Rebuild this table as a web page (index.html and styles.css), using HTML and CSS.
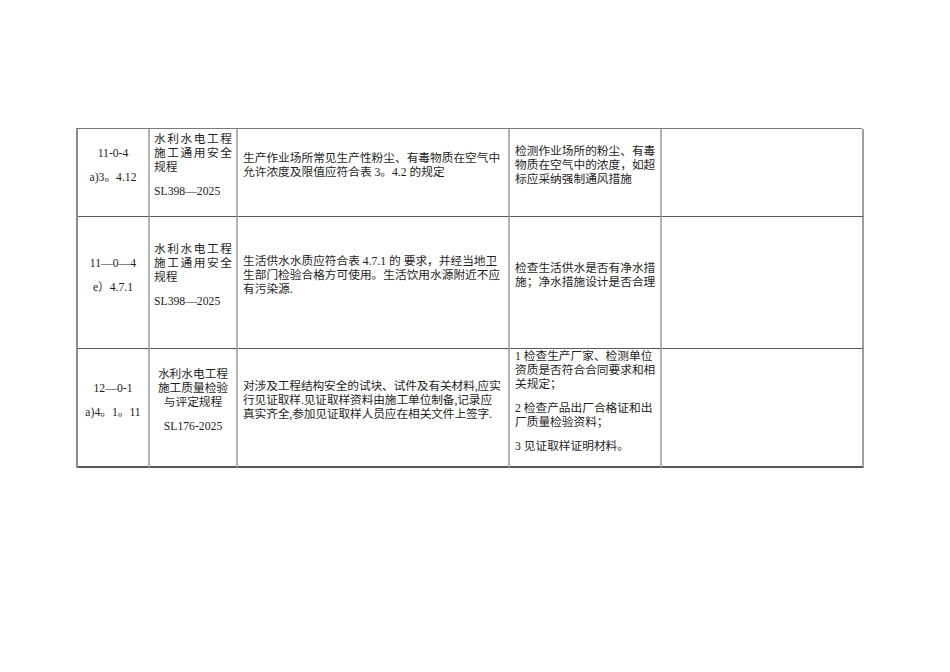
FILE: index.html
```html
<!DOCTYPE html>
<html lang="zh-CN">
<head>
<meta charset="utf-8">
<title>检查表</title>
<link rel="stylesheet" href="styles.css">
</head>
<body>
<div class="sheet">
  <div class="grid">
    <!-- row 1 -->
    <div class="cell c1 r1 center">
      <div class="p">11-0-4</div>
      <div class="p">a)3。4.12</div>
    </div>
    <div class="cell c2 r1">
      <div class="p"><span class="jl">水利水电工程</span><span class="jl">施工通用安全</span><span class="ln">规程</span></div>
      <div class="p">SL398—2025</div>
    </div>
    <div class="cell c3 r1">
      <div class="p"><span class="ln">生产作业场所常见生产性粉尘、有毒物质在空气中</span><span class="ln">允许浓度及限值应符合表 3。4.2 的规定</span></div>
    </div>
    <div class="cell c4 r1">
      <div class="p"><span class="ln">检测作业场所的粉尘、有毒</span><span class="ln">物质在空气中的浓度，如超</span><span class="ln">标应采纳强制通风措施</span></div>
    </div>
    <div class="cell c5 r1"></div>

    <!-- row 2 -->
    <div class="cell c1 r2 center">
      <div class="p">11—0—4</div>
      <div class="p">e）4.7.1</div>
    </div>
    <div class="cell c2 r2">
      <div class="p"><span class="jl">水利水电工程</span><span class="jl">施工通用安全</span><span class="ln">规程</span></div>
      <div class="p">SL398—2025</div>
    </div>
    <div class="cell c3 r2">
      <div class="p"><span class="ln">生活供水水质应符合表 4.7.1 的&nbsp;要求，并经当地卫</span><span class="ln">生部门检验合格方可使用。生活饮用水源附近不应</span><span class="ln">有污染源.</span></div>
    </div>
    <div class="cell c4 r2">
      <div class="p"><span class="ln">检查生活供水是否有净水措</span><span class="ln">施；净水措施设计是否合理</span></div>
    </div>
    <div class="cell c5 r2"></div>

    <!-- row 3 -->
    <div class="cell c1 r3 center">
      <div class="p">12—0-1</div>
      <div class="p">a)4。1。11</div>
    </div>
    <div class="cell c2 r3 center">
      <div class="p"><span class="ln">水利水电工程</span><span class="ln">施工质量检验</span><span class="ln">与评定规程</span></div>
      <div class="p">SL176-2025</div>
    </div>
    <div class="cell c3 r3">
      <div class="p"><span class="ln tight">对涉及工程结构安全的试块、试件及有关材料,应实</span><span class="ln tight">行见证取样.见证取样资料由施工单位制备,记录应</span><span class="ln tight">真实齐全,参加见证取样人员应在相关文件上签字.</span></div>
    </div>
    <div class="cell c4 r3 top">
      <div class="p"><span class="ln">1 检查生产厂家、检测单位</span><span class="ln">资质是否符合合同要求和相</span><span class="ln">关规定；</span></div>
      <div class="p"><span class="ln">2 检查产品出厂合格证和出</span><span class="ln">厂质量检验资料；</span></div>
      <div class="p"><span class="ln">3 见证取样证明材料。</span></div>
    </div>
    <div class="cell c5 r3"></div>
  </div>
</div>
</body>
</html>
```

FILE: styles.css
```css
html, body {
  margin: 0;
  padding: 0;
  background: #ffffff;
}

body {
  font-family: "Liberation Serif", "Noto Sans CJK SC", serif;
  font-size: 11.7px;
  line-height: 14px;
  color: #1e1e1e;
}

.sheet {
  padding: 128px 0 0 76px;
}

.grid {
  display: grid;
  grid-template-columns: 72px 88px 272px 152px 202px;
  grid-template-rows: 88px 132px 119px;
  width: 786px;
  box-sizing: border-box;
  border-top: 1px solid #7a7a7a;
  border-left: 2px solid #8a8a8a;
}

.cell {
  box-sizing: border-box;
  border-right: 2px solid #b4b4b4;
  border-bottom: 1px solid #5a5a5a;
  padding: 2px 4px 15px 4px;
  display: flex;
  flex-direction: column;
  justify-content: center;
  overflow: hidden;
}

.c5 {
  border-right: 2px solid #a0a0a0;
}

.r3 {
  border-bottom: 2px solid #555555;
}

.c3, .c4 {
  padding-left: 5px;
}

.center {
  text-align: center;
}

.top {
  justify-content: flex-start;
  padding-top: 1px;
}

.p + .p {
  margin-top: 10px;
}

.ln {
  display: block;
  white-space: nowrap;
}

.jl {
  display: block;
  text-align: justify;
  text-align-last: justify;
  white-space: nowrap;
}

.tight {
  letter-spacing: -0.1px;
}
```
